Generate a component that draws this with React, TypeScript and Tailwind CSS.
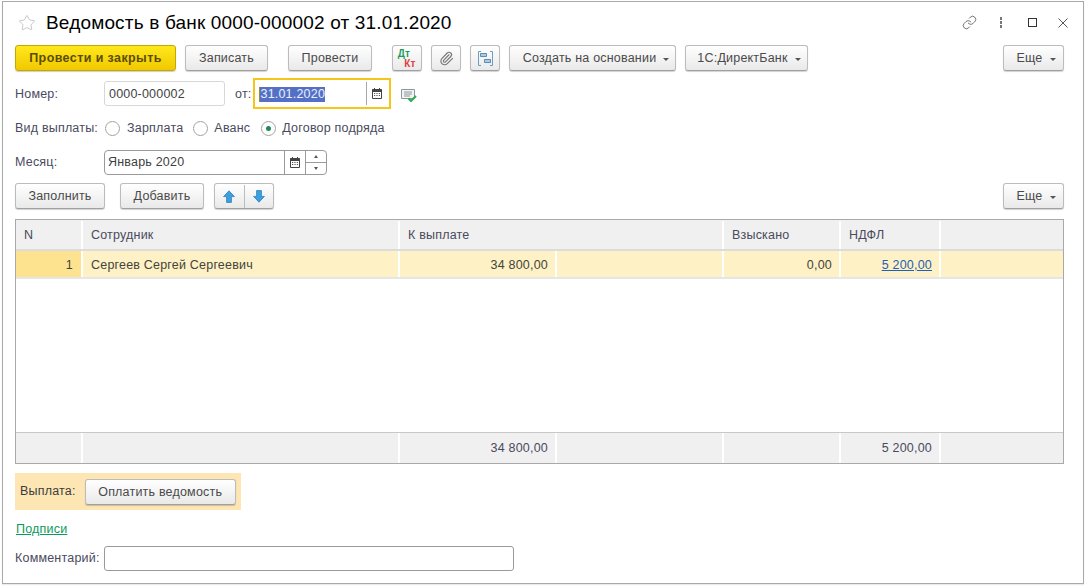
import type { ReactNode } from 'react';
import { Link, Paperclip, Star } from 'lucide-react';

const btn =
    'flex h-[26px] items-center justify-center rounded-[3px] border border-[#bcbcbc] border-b-[#a0a0a0] bg-gradient-to-b from-white to-[#e9e9e9] pt-[1px] text-[#4a4a4a] shadow-[0_1px_1px_rgba(0,0,0,0.18)]';

function Caret() {
    return <span className="ml-[7px] mt-[2px] h-0 w-0 border-x-[3.5px] border-t-[3.5px] border-x-transparent border-t-[#555]" />;
}

function Button({ className, caret, children }: { className: string; caret?: boolean; children: ReactNode }) {
    return (
        <button className={`${btn} ${className}`}>
            {children}
            {caret && <Caret />}
        </button>
    );
}

function CalendarIcon() {
    return (
        <svg width="10" height="11" viewBox="0 0 10 11">
            <path d="M0.5 1.5h9v9h-9z" fill="#fff" stroke="#444" />
            <path d="M0 1.5h10V4H0z" fill="#444" />
            <path d="M2.5 0v2M7.5 0v2" stroke="#444" />
            <path d="M2 5.5h1.2M4.4 5.5h1.2M6.8 5.5H8M2 7.5h1.2M4.4 7.5h1.2M6.8 7.5H8" stroke="#555" />
        </svg>
    );
}

function Radio({ checked }: { checked?: boolean }) {
    return (
        <span className="flex h-[15px] w-[15px] items-center justify-center rounded-full border border-[#a3a3a3] bg-white">
            {checked && <span className="h-[5px] w-[5px] rounded-full bg-[#1f8a58]" />}
        </span>
    );
}

function Arrow({ down }: { down?: boolean }) {
    return (
        <svg width="12" height="13" viewBox="0 0 12 13" className={down ? 'rotate-180' : ''}>
            <path d="M6 0.8 11.4 6.6H8.4V12.4H3.6V6.6H0.6Z" fill="#3aa0e0" stroke="#2f7fb5" strokeWidth="0.8" />
        </svg>
    );
}

const columns = 'grid grid-cols-[67px_317px_157px_167px_117px_100px_1fr]';
const cell = 'flex items-center border-r-2 border-white px-2 last:border-r-0';
const numCell = 'justify-end pr-[7px]';

export default function App() {
    return (
        <div className="h-[587px] w-[1088px] bg-white pl-[2px] pr-[4px] pb-[3px] pt-[1px] font-['Liberation_Sans',sans-serif] text-[12.5px] tracking-[0.2px] text-[#4a4a5e]">
            <div className="h-full w-full border border-[#a9a9a9] pl-[12px] pr-[19px] shadow-[0_1px_1px_rgba(0,0,0,0.08)]">
                {/* Title bar */}
                <div className="flex h-[41px] items-center">
                    <Star size={18} strokeWidth={1} className="ml-[3px] mt-[1px] text-[#b5b5b5]" />
                    <h1 className="ml-[10px] text-[19px] leading-none tracking-[0.17px] text-black">
                        Ведомость в банк 0000-000002 от 31.01.2020
                    </h1>
                    <div className="ml-auto flex items-center text-[#666]">
                        <Link size={15} strokeWidth={1.2} className="mr-[23px] text-[#444]" />
                        <span className="mr-[26px] flex flex-col gap-[1.5px]">
                            <span className="h-[2.5px] w-[2.5px] bg-[#777]" />
                            <span className="h-[2.5px] w-[2.5px] bg-[#777]" />
                            <span className="h-[2.5px] w-[2.5px] bg-[#777]" />
                        </span>
                        <span className="mr-[21px] h-[9px] w-[9px] border border-[#333]" />
                        <svg width="10" height="10" viewBox="0 0 10 10" className="mr-[-4px]">
                            <path d="M0.5 0.5l9 9M9.5 0.5l-9 9" stroke="#444" strokeWidth="0.9" />
                        </svg>
                    </div>
                </div>

                {/* Command bar */}
                <div className="mt-[2px] flex items-center">
                    <button className="flex h-[26px] w-[161px] items-center justify-center rounded-[3px] border border-[#c2a800] bg-gradient-to-b from-[#ffe81a] to-[#f0c800] pt-[1px] font-bold tracking-[0.4px] text-[#5b4d00] shadow-[0_1px_1px_rgba(0,0,0,0.2)]">
                        Провести и закрыть
                    </button>
                    <Button className="ml-[9px] w-[83px]">Записать</Button>
                    <Button className="ml-[20px] w-[84px]">Провести</Button>
                    <button className={`${btn} ml-[20px] w-[30px] flex-col text-[10px] font-bold leading-[9.5px] tracking-[0.3px]`}>
                        <span className="-ml-[6px] text-[#1f9b5e]">Дт</span>
                        <span className="ml-[6px] text-[#e0403c]">Кт</span>
                    </button>
                    <Button className="ml-[9px] w-[30px]">
                        <Paperclip size={15} strokeWidth={1.8} className="text-[#777]" />
                    </Button>
                    <Button className="ml-[9px] w-[30px]">
                        <svg width="15" height="15" viewBox="0 0 15 15" fill="none">
                            <path d="M3 0.5H0.5V14.5H3M12 0.5H14.5V14.5H12" stroke="#6d9dbf" />
                            <path d="M2.5 2.5h6v3h-6zM6.5 8.5h6v3h-6z" fill="#a9cbe3" stroke="#5a8db2" />
                        </svg>
                    </Button>
                    <Button className="ml-[9px] w-[167px] pl-[7px]" caret>Создать на основании</Button>
                    <Button className="ml-[9px] w-[123px] pl-[5px]" caret>1С:ДиректБанк</Button>
                    <Button className="ml-auto w-[61px] pl-[5px]" caret>Еще</Button>
                </div>

                {/* Number and date */}
                <div className="mt-[7px] flex h-[31px] items-center">
                    <span className="w-[89px] pt-[1px]">Номер:</span>
                    <div className="flex h-[25px] w-[121px] items-center rounded-[3px] border border-[#d8d8d8] px-[4px] pt-[1px] text-[#3f3f3f]">
                        0000-000002
                    </div>
                    <span className="ml-[10px] pt-[1px]">от:</span>
                    <div className="ml-[2px] flex h-[31px] w-[138px] items-center border-2 border-[#f5c518] pl-[4px]">
                        <span className="mt-[1px] border-l border-[#a08a30] bg-[#5470c6] leading-[15px] text-[#e8f0ff]">31.01.2020</span>
                        <span className="ml-auto flex h-[23px] w-[23px] items-center border-l border-[#a8a8a8] pl-[5px]">
                            <CalendarIcon />
                        </span>
                    </div>
                    <svg width="16" height="14" viewBox="0 0 16 14" className="ml-[10px] mt-[2px]">
                        <path d="M0.5 1.5h13v9h-13z" fill="#f4f4f4" stroke="#8a979f" />
                        <path d="M3 4h8M3 6h8M3 8h6" stroke="#8a979f" />
                        <path d="M7.5 10.5l2.5 2.5 5-5" fill="none" stroke="#2fa84f" strokeWidth="2" />
                    </svg>
                </div>

                {/* Payment kind */}
                <div className="mt-[3px] flex h-[32px] items-center">
                    <span className="w-[90px] pt-[1px]">Вид выплаты:</span>
                    <Radio />
                    <span className="ml-[7px] pt-[1px]">Зарплата</span>
                    <span className="ml-[10px]"><Radio /></span>
                    <span className="ml-[6px] pt-[1px]">Аванс</span>
                    <span className="ml-[11px]"><Radio checked /></span>
                    <span className="ml-[6px] pt-[1px]">Договор подряда</span>
                </div>

                {/* Month */}
                <div className="mt-[6px] flex h-[25px] items-center">
                    <span className="w-[89px]">Месяц:</span>
                    <div className="flex h-[25px] w-[223px] items-stretch rounded-[4px] border border-[#9a9a9a] text-[#3f3f3f]">
                        <span className="flex flex-1 items-center px-[3px]">Январь 2020</span>
                        <span className="flex w-[21px] items-center justify-center border-l border-[#9a9a9a]">
                            <CalendarIcon />
                        </span>
                        <span className="flex w-[21px] flex-col border-l border-[#9a9a9a]">
                            <span className="flex flex-1 items-center justify-center border-b border-[#9a9a9a]">
                                <span className="h-0 w-0 border-x-[2.5px] border-b-[3px] border-x-transparent border-b-[#555]" />
                            </span>
                            <span className="flex flex-1 items-center justify-center">
                                <span className="h-0 w-0 border-x-[2.5px] border-t-[3px] border-x-transparent border-t-[#555]" />
                            </span>
                        </span>
                    </div>
                </div>

                {/* Table command bar */}
                <div className="mt-[8px] flex items-center">
                    <Button className="w-[90px]">Заполнить</Button>
                    <Button className="ml-[15px] w-[84px]">Добавить</Button>
                    <div className={`${btn} ml-[10px] w-[60px]`}>
                        <span className="flex h-full flex-1 items-center justify-center border-r border-[#bcbcbc]"><Arrow /></span>
                        <span className="flex h-full flex-1 items-center justify-center"><Arrow down /></span>
                    </div>
                    <Button className="ml-auto w-[61px] pl-[5px]" caret>Еще</Button>
                </div>

                {/* Table */}
                <div className="mt-[10px] flex h-[245px] flex-col border border-[#a9a9a9]">
                    <div className={`${columns} h-[31px] border-b-2 border-[#dcdcdc] bg-[#f0f0f0] pt-[1px]`}>
                        <div className={cell}>N</div>
                        <div className={cell}>Сотрудник</div>
                        <div className={`${cell} col-span-2`}>К выплате</div>
                        <div className={cell}>Взыскано</div>
                        <div className={cell}>НДФЛ</div>
                        <div className={cell} />
                    </div>
                    <div className={`${columns} h-[28px] border-b-2 border-[#e6e6e6] bg-[#fdf1c5] text-[#44443a]`}>
                        <div className={`${cell} justify-end bg-[#fde28f] pt-[2px]`}>1</div>
                        <div className={`${cell} pt-[2px]`}>Сергеев Сергей Сергеевич</div>
                        <div className={`${cell} ${numCell} pt-[2px]`}>34 800,00</div>
                        <div className={cell} />
                        <div className={`${cell} ${numCell} pt-[2px]`}>0,00</div>
                        <div className={`${cell} ${numCell} pt-[2px] text-[#1f5fb5] underline`}>5 200,00</div>
                        <div className={cell} />
                    </div>
                    <div className="flex-1" />
                    <div className={`${columns} h-[31px] border-t border-[#c8c8c8] bg-[#f0f0f0]`}>
                        <div className={cell} />
                        <div className={cell} />
                        <div className={`${cell} ${numCell}`}>34 800,00</div>
                        <div className={cell} />
                        <div className={cell} />
                        <div className={`${cell} ${numCell}`}>5 200,00</div>
                        <div className={cell} />
                    </div>
                </div>

                {/* Payment */}
                <div className="mt-[9px] flex h-[37px] w-[226px] items-center bg-[#fde6b3] pl-[5px] text-[#3c3c3c]">
                    <span>Выплата:</span>
                    <Button className="ml-[9px] w-[151px]">Оплатить ведомость</Button>
                </div>

                <a className="ml-[1px] mt-[10px] block text-[#0a9b5c] underline">Подписи</a>

                {/* Comment */}
                <div className="mt-[7px] flex items-center">
                    <span className="w-[89px]">Комментарий:</span>
                    <div className="h-[25px] w-[410px] rounded-[3px] border border-[#9a9a9a]" />
                </div>
            </div>
        </div>
    );
}
